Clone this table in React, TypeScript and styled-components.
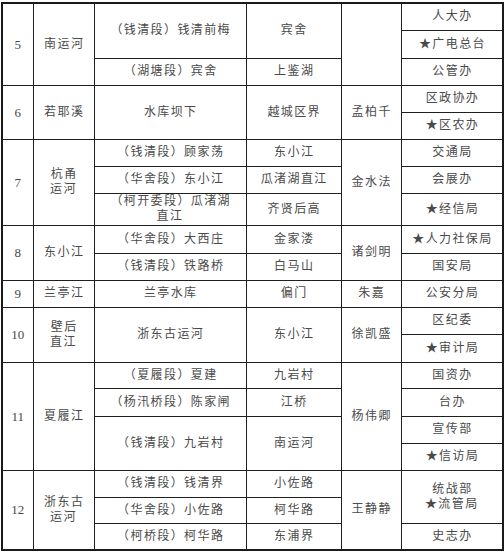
import React from 'react'
import styled, { createGlobalStyle } from 'styled-components'

const GlobalStyle = createGlobalStyle`
  html, body {
    margin: 0;
    padding: 0;
    background: #ffffff;
  }
  body {
    font-family: "Liberation Serif", "Noto Sans CJK SC", serif;
  }
`

const Wrap = styled.div`
  width: 504px;
  height: 552px;
  padding: 2px 0 0 1px;
  box-sizing: border-box;
  background: #ffffff;
`

const Sheet = styled.table`
  width: 502px;
  table-layout: fixed;
  border-collapse: collapse;
  border: 2px solid #1a1a1a;
`

const Row = styled.tr<{ $h: number }>`
  height: ${(p) => p.$h}px;
`

const Cell = styled.td`
  border: 1px solid #1f1f1f;
  padding: 0;
  text-align: center;
  vertical-align: middle;
  color: #4a4a4a;
  font-size: 12px;
  line-height: 15px;
  letter-spacing: 1.4px;
  text-indent: 1.4px;
  white-space: nowrap;
`

const Num = styled(Cell)`
  font-family: "Liberation Serif", serif;
  font-size: 13px;
  letter-spacing: 0;
  text-indent: 0;
  color: #4a4a4a;
`

const cols = [31, 61, 152, 95, 60, 102]
const heights = [27, 28, 27, 27, 27, 27, 27, 32, 28, 27, 27, 27, 28, 26, 28, 27, 27, 27, 26, 27]

export default function App() {
  const h = (i: number) => heights[i]
  return (
    <>
      <GlobalStyle />
      <Wrap>
        <Sheet>
          <colgroup>
            {cols.map((w, i) => (
              <col key={i} style={{ width: w }} />
            ))}
          </colgroup>
          <tbody>
            {/* 5 南运河 */}
            <Row $h={h(0)}>
              <Num rowSpan={3}>5</Num>
              <Cell rowSpan={3}>南运河</Cell>
              <Cell rowSpan={2}>（钱清段）钱清前梅</Cell>
              <Cell rowSpan={2}>宾舍</Cell>
              <Cell rowSpan={3}></Cell>
              <Cell>人大办</Cell>
            </Row>
            <Row $h={h(1)}>
              <Cell>★广电总台</Cell>
            </Row>
            <Row $h={h(2)}>
              <Cell>（湖塘段）宾舍</Cell>
              <Cell>上鉴湖</Cell>
              <Cell>公管办</Cell>
            </Row>

            {/* 6 若耶溪 */}
            <Row $h={h(3)}>
              <Num rowSpan={2}>6</Num>
              <Cell rowSpan={2}>若耶溪</Cell>
              <Cell rowSpan={2}>水库坝下</Cell>
              <Cell rowSpan={2}>越城区界</Cell>
              <Cell rowSpan={2}>孟柏千</Cell>
              <Cell>区政协办</Cell>
            </Row>
            <Row $h={h(4)}>
              <Cell>★区农办</Cell>
            </Row>

            {/* 7 杭甬运河 */}
            <Row $h={h(5)}>
              <Num rowSpan={3}>7</Num>
              <Cell rowSpan={3}>
                杭甬
                <br />
                运河
              </Cell>
              <Cell>（钱清段）顾家荡</Cell>
              <Cell>东小江</Cell>
              <Cell rowSpan={3}>金水法</Cell>
              <Cell>交通局</Cell>
            </Row>
            <Row $h={h(6)}>
              <Cell>（华舍段）东小江</Cell>
              <Cell>瓜渚湖直江</Cell>
              <Cell>会展办</Cell>
            </Row>
            <Row $h={h(7)}>
              <Cell>
                （柯开委段）瓜渚湖
                <br />
                直江
              </Cell>
              <Cell>齐贤后高</Cell>
              <Cell>★经信局</Cell>
            </Row>

            {/* 8 东小江 */}
            <Row $h={h(8)}>
              <Num rowSpan={2}>8</Num>
              <Cell rowSpan={2}>东小江</Cell>
              <Cell>（华舍段）大西庄</Cell>
              <Cell>金家溇</Cell>
              <Cell rowSpan={2}>诸剑明</Cell>
              <Cell>★人力社保局</Cell>
            </Row>
            <Row $h={h(9)}>
              <Cell>（钱清段）铁路桥</Cell>
              <Cell>白马山</Cell>
              <Cell>国安局</Cell>
            </Row>

            {/* 9 兰亭江 */}
            <Row $h={h(10)}>
              <Num>9</Num>
              <Cell>兰亭江</Cell>
              <Cell>兰亭水库</Cell>
              <Cell>偏门</Cell>
              <Cell>朱嘉</Cell>
              <Cell>公安分局</Cell>
            </Row>

            {/* 10 壁后直江 */}
            <Row $h={h(11)}>
              <Num rowSpan={2}>10</Num>
              <Cell rowSpan={2}>
                壁后
                <br />
                直江
              </Cell>
              <Cell rowSpan={2}>浙东古运河</Cell>
              <Cell rowSpan={2}>东小江</Cell>
              <Cell rowSpan={2}>徐凯盛</Cell>
              <Cell>区纪委</Cell>
            </Row>
            <Row $h={h(12)}>
              <Cell>★审计局</Cell>
            </Row>

            {/* 11 夏履江 */}
            <Row $h={h(13)}>
              <Num rowSpan={4}>11</Num>
              <Cell rowSpan={4}>夏履江</Cell>
              <Cell>（夏履段）夏建</Cell>
              <Cell>九岩村</Cell>
              <Cell rowSpan={4}>杨伟卿</Cell>
              <Cell>国资办</Cell>
            </Row>
            <Row $h={h(14)}>
              <Cell>（杨汛桥段）陈家闸</Cell>
              <Cell>江桥</Cell>
              <Cell>台办</Cell>
            </Row>
            <Row $h={h(15)}>
              <Cell rowSpan={2}>（钱清段）九岩村</Cell>
              <Cell rowSpan={2}>南运河</Cell>
              <Cell>宣传部</Cell>
            </Row>
            <Row $h={h(16)}>
              <Cell>★信访局</Cell>
            </Row>

            {/* 12 浙东古运河 */}
            <Row $h={h(17)}>
              <Num rowSpan={3}>12</Num>
              <Cell rowSpan={3}>
                浙东古
                <br />
                运河
              </Cell>
              <Cell>（钱清段）钱清界</Cell>
              <Cell>小佐路</Cell>
              <Cell rowSpan={3}>王静静</Cell>
              <Cell rowSpan={2}>
                统战部
                <br />
                ★流管局
              </Cell>
            </Row>
            <Row $h={h(18)}>
              <Cell>（华舍段）小佐路</Cell>
              <Cell>柯华路</Cell>
            </Row>
            <Row $h={h(19)}>
              <Cell>（柯桥段）柯华路</Cell>
              <Cell>东浦界</Cell>
              <Cell>史志办</Cell>
            </Row>
          </tbody>
        </Sheet>
      </Wrap>
    </>
  )
}
